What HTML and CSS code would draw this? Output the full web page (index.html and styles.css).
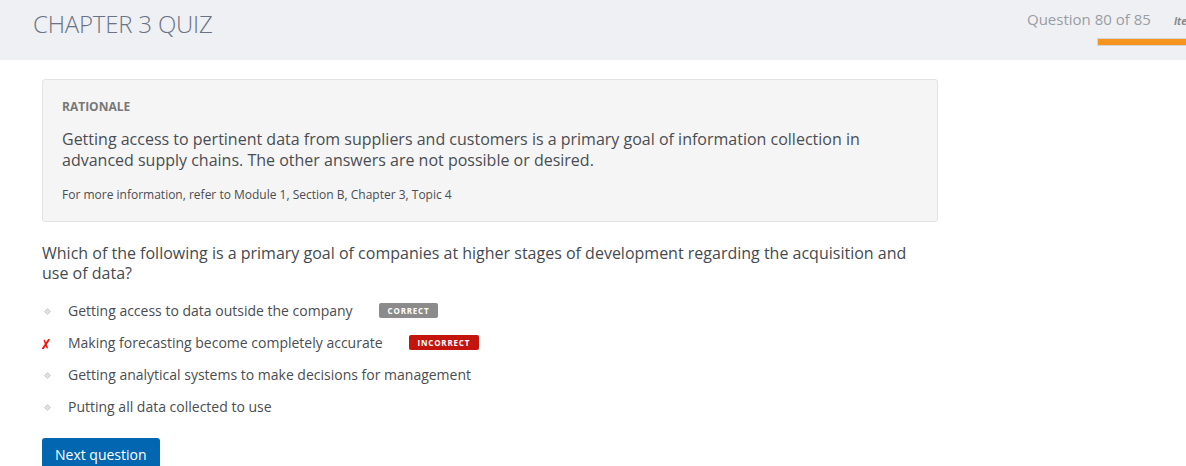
FILE: index.html
```html
<!DOCTYPE html>
<html>
<head>
<meta charset="utf-8">
<link rel="stylesheet" href="styles.css">
</head>
<body>
<header class="topbar">
  <h1 class="title">CHAPTER 3 QUIZ</h1>
  <div class="progress">
    <div class="progress-row">
      <span class="progress-text">Question 80 of 85</span>
      <span class="progress-item">Item</span>
    </div>
    <div class="progress-bar"><div class="progress-fill"></div></div>
  </div>
</header>
<main class="content">
  <section class="rationale">
    <div class="rationale-label">RATIONALE</div>
    <p class="rationale-text">Getting access to pertinent data from suppliers and customers is a primary goal of information collection in advanced supply chains. The other answers are not possible or desired.</p>
    <p class="rationale-ref">For more information, refer to Module 1, Section B, Chapter 3, Topic 4</p>
  </section>
  <p class="question">Which of the following is a primary goal of companies at higher stages of development regarding the acquisition and use of data?</p>
  <ul class="options">
    <li class="option">
      <span class="mark"><svg width="7" height="7" viewBox="0 0 7 7"><path d="M3.5 0.5 L6.5 3.5 L3.5 6.5 L0.5 3.5 Z" fill="#e2e2e2" stroke="#cacaca" stroke-width="1"/></svg></span>
      <span class="option-text">Getting access to data outside the company</span>
      <span class="badge badge-correct">CORRECT</span>
    </li>
    <li class="option">
      <span class="mark mark-x"><svg width="8" height="10" viewBox="0 0 8 10"><path d="M6.8 0.8 C5 3.5 3 6.5 1 9.3" stroke="#ee1a10" stroke-width="2" fill="none" stroke-linecap="round"/><path d="M2.4 1.5 C3.2 4 4.2 6.5 5.2 8.8" stroke="#ee1a10" stroke-width="1.5" fill="none" stroke-linecap="round"/></svg></span>
      <span class="option-text">Making forecasting become completely accurate</span>
      <span class="badge badge-incorrect">INCORRECT</span>
    </li>
    <li class="option">
      <span class="mark"><svg width="7" height="7" viewBox="0 0 7 7"><path d="M3.5 0.5 L6.5 3.5 L3.5 6.5 L0.5 3.5 Z" fill="#e2e2e2" stroke="#cacaca" stroke-width="1"/></svg></span>
      <span class="option-text">Getting analytical systems to make decisions for management</span>
    </li>
    <li class="option">
      <span class="mark"><svg width="7" height="7" viewBox="0 0 7 7"><path d="M3.5 0.5 L6.5 3.5 L3.5 6.5 L0.5 3.5 Z" fill="#e2e2e2" stroke="#cacaca" stroke-width="1"/></svg></span>
      <span class="option-text">Putting all data collected to use</span>
    </li>
  </ul>
  <button class="next-btn">Next question</button>
</main>
</body>
</html>
```
FILE: styles.css
```css
html, body {
  margin: 0;
  padding: 0;
  background: #ffffff;
  overflow: hidden;
}
body {
  font-family: "Open Sans", "Liberation Sans", sans-serif;
  color: #454a50;
  width: 1186px;
  height: 466px;
}
.topbar {
  height: 60px;
  background: #eff0f4;
  display: flex;
  justify-content: space-between;
  overflow: hidden;
}
.title {
  margin: 0;
  padding: 8px 0 0 33px;
  font-size: 24px;
  line-height: 32px;
  font-weight: 300;
  color: #6a7383;
  letter-spacing: -0.2px;
}
.progress {
  width: 159px;
  padding-top: 9px;
  flex-shrink: 0;
}
.progress-row {
  display: flex;
  align-items: baseline;
  white-space: nowrap;
}
.progress-text {
  font-size: 15px;
  line-height: 20px;
  color: #9a9da3;
}
.progress-item {
  margin-left: 23px;
  font-size: 10px;
  font-weight: 700;
  font-style: italic;
  color: #888;
}
.progress-bar {
  margin: 9px 0 0 70px;
  width: 120px;
  height: 8px;
  box-sizing: border-box;
  border: 1px solid #d6d6d6;
  background: #f7941d;
}
.progress-fill {
  height: 100%;
}
.content {
  margin-left: 42px;
  width: 896px;
  padding-top: 19px;
}
.rationale {
  background: #f5f5f5;
  border: 1px solid #e3e3e3;
  border-radius: 3px;
  padding: 19px 19px 18px 19px;
}
.rationale-label {
  font-size: 12px;
  line-height: 16px;
  font-weight: 700;
  color: #787878;
}
.rationale-text {
  margin: 14px 0 0 0;
  font-size: 16px;
  line-height: 21px;
  color: #4a4d52;
}
.rationale-ref {
  margin: 16px 0 0 0;
  font-size: 12px;
  line-height: 16px;
  color: #4a4d52;
}
.question {
  margin: 21px 0 0 0;
  max-width: 880px;
  font-size: 16px;
  line-height: 20px;
  color: #454a50;
}
.options {
  list-style: none;
  margin: 18px 0 0 0;
  padding: 0;
  display: flex;
  flex-direction: column;
  gap: 12px;
}
.option {
  display: flex;
  align-items: center;
  height: 20px;
}
.mark {
  width: 26px;
  display: flex;
  align-items: center;
  padding-left: 2px;
  box-sizing: border-box;
}
.mark-x {
  padding-left: 0;
  padding-top: 1px;
}
.option-text {
  font-size: 14px;
  line-height: 20px;
  color: #4a4d52;
}
.badge {
  margin-left: 26px;
  height: 15px;
  padding: 0 9px;
  border-radius: 2px;
  color: #fff;
  font-size: 8px;
  font-weight: 700;
  letter-spacing: 0.8px;
  line-height: 15px;
  position: relative;
  top: -1px;
}
.badge-correct {
  background: #8b8b8b;
}
.badge-incorrect {
  background: #c4150c;
}
.next-btn {
  margin-top: 21px;
  background: #0266b0;
  color: #fff;
  border: none;
  border-radius: 3px;
  font-family: "Open Sans", "Liberation Sans", sans-serif;
  font-size: 14px;
  line-height: 20px;
  padding: 7px 13px;
  width: 118px;
  text-align: left;
}
```
